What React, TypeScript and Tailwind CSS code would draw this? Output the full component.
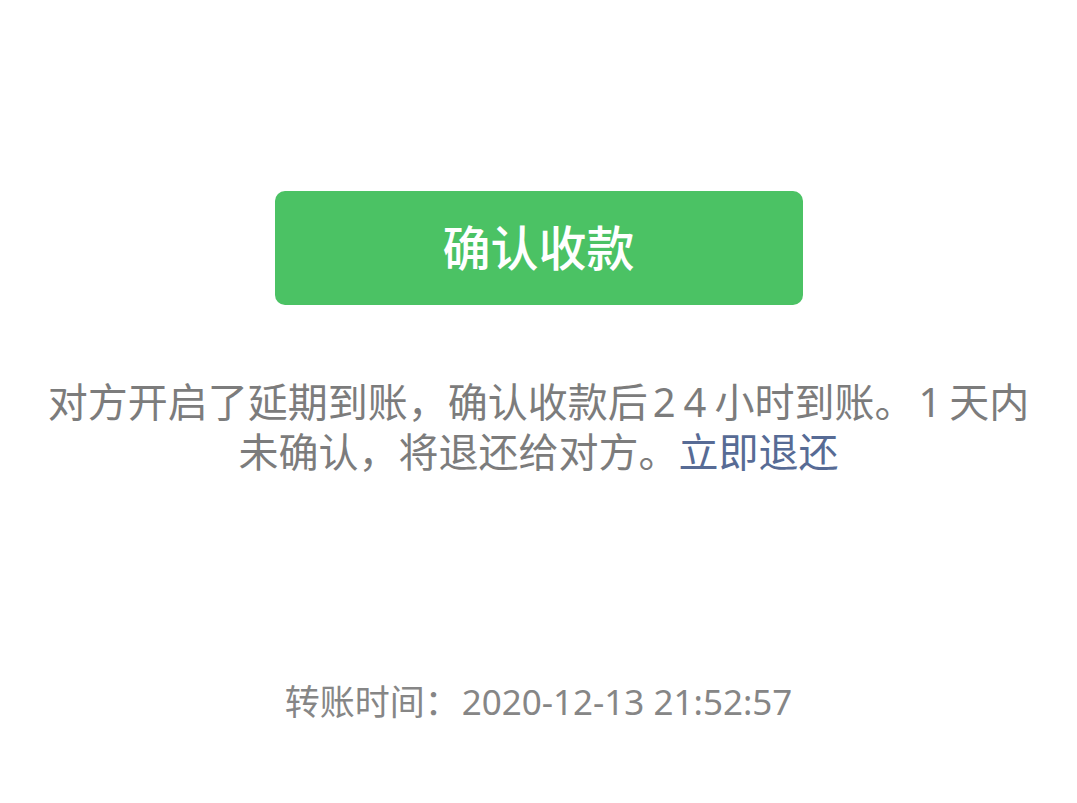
import React from 'react';

export default function App() {
  return (
    <div className="min-h-screen w-full bg-white flex flex-col items-center pt-[191px] [font-family:'Noto_Sans','Noto_Sans_CJK_SC',sans-serif]">
      {/* primary action */}
      <button className="w-[528px] h-[114px] rounded-[10px] bg-[#4bc264] text-white text-[48px] font-medium flex items-center justify-center">
        确认收款
      </button>

      <p className="mt-[72px] w-[1040px] text-center text-[40px] leading-[50px] text-[#7c7c7c]">
        对方开启了延期到账，确认收款后<span className="ml-[5px] tracking-[8px]">24</span>小时到账。
        <span className="ml-[4px] tracking-[8px]">1</span>天内
        <br />
        未确认，将退还给对方。
        <span className="text-[#576b95]">立即退还</span>
      </p>

      <p className="mt-[205px] text-[35px] leading-[40px] text-[#868686]">
        转账时间：<span className="ml-[2px]">2020-12-13 21:52:57</span>
      </p>
    </div>
  );
}
